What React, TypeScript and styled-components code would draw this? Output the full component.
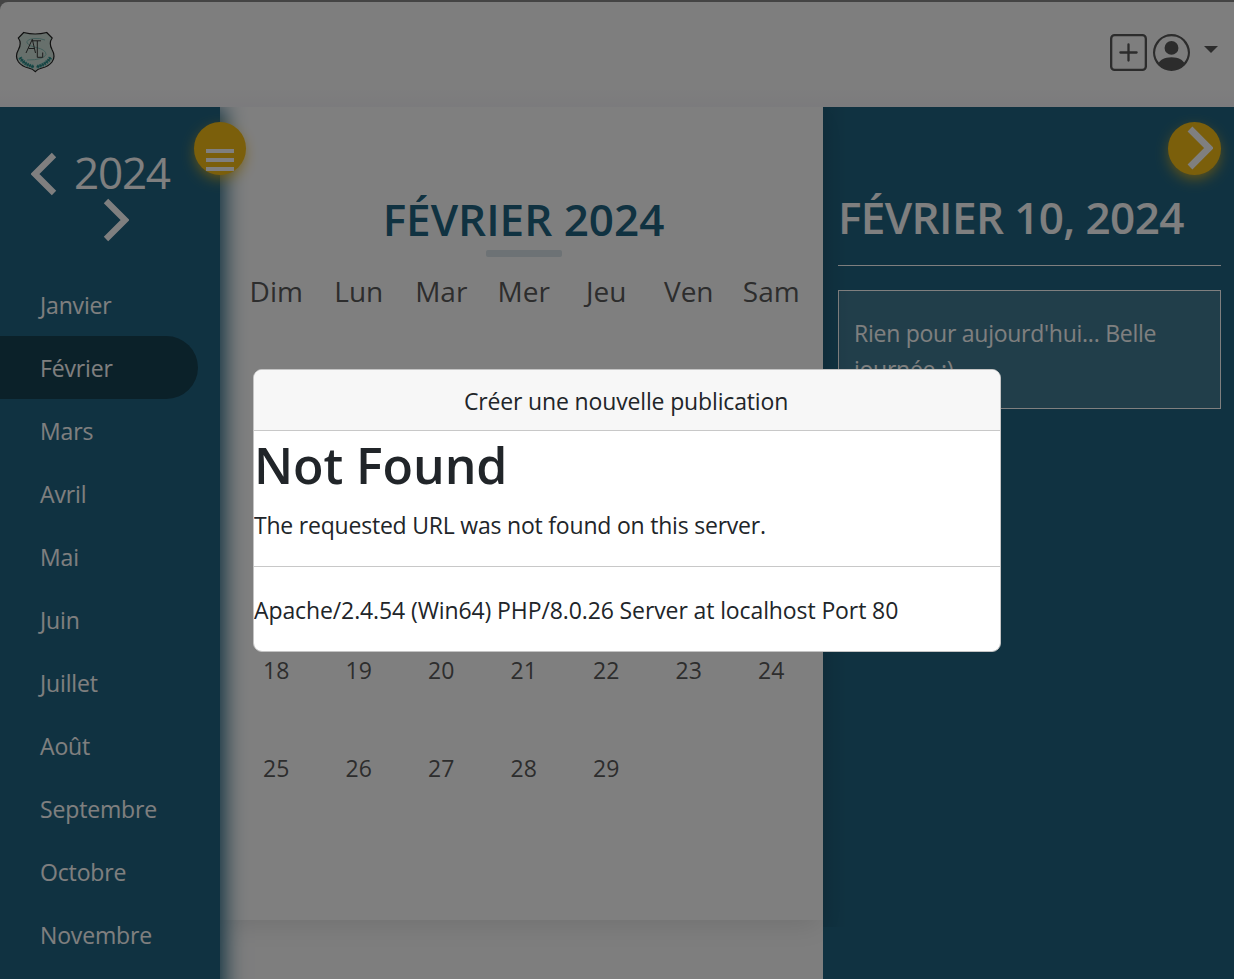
import React from 'react';
import styled, { createGlobalStyle } from 'styled-components';

const GlobalStyle = createGlobalStyle`
  * { box-sizing: border-box; }
  html, body { margin: 0; height: 979px; overflow: hidden; background: #fff; }
  body { font-family: 'Open Sans', 'Noto Sans', sans-serif; font-size: 23px; color: #212529; }
  h1, h2, p, ul { margin: 0; padding: 0; font-weight: inherit; }
`;

const Text = styled.span<{ $ls?: number }>`
  white-space: nowrap;
  letter-spacing: ${(p) => p.$ls ?? 0}px;
`;

const Page = styled.div`
  position: relative;
  display: flex;
  flex-direction: column;
  width: 1234px;
  height: 979px;
  overflow: hidden;
  background: #888;
`;

const Header = styled.header`
  display: flex;
  flex: none;
  justify-content: space-between;
  height: 105px;
  margin-top: 2px;
  padding: 27px 16px 0 14px;
  border-top-left-radius: 8px;
  background: linear-gradient(#fdfdfd 80%, #f7f6fa);
`;

const Actions = styled.div`
  display: flex;
  align-items: flex-start;
  padding-top: 5px;
  gap: 6px;
`;

const Caret = styled.span`
  margin: 12px 0 0 8px;
  border: 7px solid transparent;
  border-top-color: #585858;
  border-bottom: 0;
`;

const Calendar = styled.main`
  display: flex;
  flex: 1;
  min-height: 0;
  overflow: hidden;
  background: #fcfcfc;
`;

const Sidebar = styled.aside`
  position: relative;
  z-index: 2;
  flex: none;
  width: 220px;
  height: 900px;
  background: #216583;
  box-shadow: 5px 0 20px 0 #216583;
  color: #fff;
`;

const YearPicker = styled.div`
  display: flex;
  flex-wrap: wrap;
  align-content: flex-start;
  height: 166px;
  padding: 43px 15px 0 31px;
  font-size: 44px;
  line-height: 45px;
`;

const YearButton = styled.span<{ $next?: boolean }>`
  display: flex;
  height: 46px;
  align-items: center;
  padding-top: 2px;
  margin: ${(p) => (p.$next ? '0 0 0 72px' : '0 17px 0 0')};
`;

const Month = styled.li<{ $active?: boolean }>`
  display: flex;
  align-items: center;
  width: ${(p) => (p.$active ? 198 : 220)}px;
  height: 63px;
  padding-left: 40px;
  border-radius: 0 32px 32px 0;
  background: ${(p) => (p.$active ? '#164253' : 'transparent')};
`;

const RoundButton = styled.button<{ $left: number; $size: number }>`
  position: absolute;
  z-index: 3;
  top: 15px;
  left: ${(p) => p.$left}px;
  display: flex;
  align-items: flex-start;
  width: ${(p) => p.$size}px;
  height: 53px;
  padding: 0;
  border: 0;
  border-radius: 50%;
  background: #f7be16;
  box-shadow: 0 5px 15px -3px #f7be16;
`;

const Bars = styled.span`
  display: flex;
  flex-direction: column;
  justify-content: space-between;
  width: 28px;
  height: 22px;
  margin: 27px 0 0 12px;
  & > i { height: 4px; background: #fff; }
`;

const CloseIcon = styled.span`
  display: flex;
  margin: 4px 0 0 19px;
`;

const MonthView = styled.section`
  z-index: 1;
  flex: none;
  width: 603px;
  height: 813px;
  padding: 85px 6px 0 15px;
  background: #fff;
  box-shadow: 0 10px 24px -5px rgba(0, 0, 0, 0.1);
`;

const MonthTitle = styled.h2`
  display: flex;
  flex-direction: column;
  align-items: center;
  height: 76px;
  margin-left: -5px;
  font-size: 44px;
  line-height: 54px;
  font-weight: 600;
  color: #216583;
  &::after {
    content: '';
    width: 76px;
    height: 7px;
    margin-top: 4px;
    border-radius: 2px;
    background: #dae4ea;
  }
`;

const Grid = styled.div`
  display: grid;
  grid-template-columns: repeat(7, 82.5px);
  grid-template-rows: 46px;
  grid-auto-rows: 98px;
  justify-items: center;
  color: #5b5b5b;
`;

const WeekDay = styled.div`
  font-size: 28px;
  line-height: 46px;
`;

const PastWeeks = styled.div`
  grid-column: 1 / -1;
  grid-row: span 3;
`;

const Day = styled.div`
  padding-top: 46px;
  line-height: 32px;
`;

const Events = styled.section`
  position: relative;
  flex: 1;
  padding: 85px 13px 0 15px;
  background: #216583;
  color: #fff;
  &::before {
    content: '';
    position: absolute;
    inset: 0 auto auto 0;
    width: 26px;
    height: 820px;
    background: linear-gradient(90deg, rgba(0, 0, 0, 0.08), transparent);
  }
`;

const EventsTitle = styled.h2`
  height: 74px;
  border-bottom: 1px solid #fff;
  font-size: 44px;
  line-height: 50px;
  font-weight: 600;
`;

const EventCard = styled.div`
  height: 119px;
  margin-top: 24px;
  padding: 24px 15px;
  border: 1px solid #fff;
  background: rgba(255, 255, 255, 0.15);
  line-height: 36px;
`;

const Backdrop = styled.div`
  position: absolute;
  z-index: 10;
  inset: 0;
  background: rgba(0, 0, 0, 0.5);
`;

const Modal = styled.div`
  position: absolute;
  top: 369px;
  left: 253px;
  width: 748px;
  height: 283px;
  border: 1px solid #c4c4c4;
  border-radius: 9px;
  background: #fff;
  overflow: hidden;
`;

const ModalHeader = styled.div`
  height: 61px;
  padding-right: 2px;
  border-bottom: 1px solid #c8c8c8;
  background: #f7f7f7;
  line-height: 63px;
  text-align: center;
`;

const NotFound = styled.h1`
  padding-top: 4px;
  font-size: 50px;
  line-height: 60px;
  font-weight: 600;
`;

const Message = styled.p`
  height: 72px;
  padding-top: 12px;
  border-bottom: 1px solid #c8c8c8;
  line-height: 36px;
`;

const Signature = styled.p`
  padding-top: 25px;
  line-height: 36px;
`;

function Chevron({ right, bold }: { right?: boolean; bold?: boolean }) {
  return (
    <svg width="26" height="44" viewBox="0 0 26 44">
      <path d={right ? 'M3 3 22 22 3 41' : 'M23 3 4 22 23 41'} fill="none" stroke="#fff" strokeWidth={bold ? 6.8 : 6.2} />
    </svg>
  );
}

function Crest() {
  return (
    <svg width="42" height="46" viewBox="0 0 42 46" fill="none">
      <path
        d="M9.700 3.500Q21 6.500 32.700 3.500L38.200 9Q34.500 14 38 20.500Q42 27.500 38 33Q34.500 37.500 28 39Q23.500 40 21.300 42.600Q19 40 14.500 39Q8 37.500 4.500 33Q0.500 27.500 4.500 20.500Q8 14 4.300 9Z"
        fill="#cfe0d8"
        stroke="#222"
        strokeWidth="1.200"
      />
      <path d="M31 11Q26 9 20 9.500Q12 10.500 13 14Q15 17 22 18.500Q32 20.500 32 25.500Q30 31 13 31" stroke="#7dbab3" strokeWidth=".9" />
      <path d="M12 24 18.300 10.300 21.500 24M14.500 19.500H20.500M18 11.800H27M23.300 11.800V28.300H28.700V23.500" stroke="#3a3a3a" strokeWidth="1" />
      <path d="M6 28.500Q10 35.500 20 38M36.500 28.500Q32.500 35.500 22.500 38" stroke="#37a09d" strokeWidth="3.600" strokeDasharray="1.600 .9" />
      <path d="M6 28.500Q10 35.500 20 38M36.500 28.500Q32.500 35.500 22.500 38" stroke="#2f8482" strokeWidth="1.400" />
    </svg>
  );
}

const months = ['Janvier', 'Février', 'Mars', 'Avril', 'Mai', 'Juin', 'Juillet', 'Août', 'Septembre', 'Octobre', 'Novembre'];
const weekDays = ['Dim', 'Lun', 'Mar', 'Mer', 'Jeu', 'Ven', 'Sam'];
const days = Array.from({ length: 12 }, (_, i) => 18 + i);

export default function App() {
  return (
    <Page>
      <GlobalStyle />
      <Header>
        <Crest />
        <Actions>
          <svg width="37" height="37" viewBox="0 0 16 16" fill="#585858">
            <path d="M14 1a1 1 0 0 1 1 1v12a1 1 0 0 1-1 1H2a1 1 0 0 1-1-1V2a1 1 0 0 1 1-1zM2 0a2 2 0 0 0-2 2v12a2 2 0 0 0 2 2h12a2 2 0 0 0 2-2V2a2 2 0 0 0-2-2z" />
            <path d="M8 4a.5.5 0 0 1 .5.5v3h3a.5.5 0 0 1 0 1h-3v3a.5.5 0 0 1-1 0v-3h-3a.5.5 0 0 1 0-1h3v-3A.5.5 0 0 1 8 4" />
          </svg>
          <svg width="37" height="37" viewBox="0 0 16 16" fill="#585858">
            <path d="M11 6a3 3 0 1 1-6 0 3 3 0 0 1 6 0" />
            <path fillRule="evenodd" d="M0 8a8 8 0 1 1 16 0A8 8 0 0 1 0 8m8-7a7 7 0 0 0-5.468 11.370C3.242 11.226 4.805 10 8 10s4.757 1.225 5.468 2.370A7 7 0 0 0 8 1" />
          </svg>
          <Caret />
        </Actions>
      </Header>
      <Calendar>
        <Sidebar>
          <YearPicker>
            <YearButton><Chevron /></YearButton>
            <Text $ls={-1.2}>2024</Text>
            <YearButton $next><Chevron right /></YearButton>
          </YearPicker>
          <ul>
            {months.map((m) => (
              <Month key={m} $active={m === 'Février'}><Text $ls={-0.15}>{m}</Text></Month>
            ))}
          </ul>
          <RoundButton $left={194} $size={52}>
            <Bars><i /><i /><i /></Bars>
          </RoundButton>
        </Sidebar>
        <MonthView>
          <MonthTitle><Text>FÉVRIER 2024</Text></MonthTitle>
          <Grid>
            {weekDays.map((d) => <WeekDay key={d}>{d}</WeekDay>)}
            <PastWeeks />
            {days.map((d) => <Day key={d}>{d}</Day>)}
          </Grid>
        </MonthView>
        <Events>
          <EventsTitle><Text $ls={-0.6}>FÉVRIER 10, 2024</Text></EventsTitle>
          <EventCard>
            <Text $ls={-0.26}>Rien pour aujourd'hui... Belle</Text><br />
            <Text $ls={-0.26}>journée :)</Text>
          </EventCard>
          <RoundButton $left={345} $size={53}>
            <CloseIcon><Chevron right bold /></CloseIcon>
          </RoundButton>
        </Events>
      </Calendar>
      <Backdrop>
        <Modal role="dialog">
          <ModalHeader><Text $ls={-0.15}>Créer une nouvelle publication</Text></ModalHeader>
          <NotFound><Text $ls={-0.1}>Not Found</Text></NotFound>
          <Message><Text $ls={-0.21}>The requested URL was not found on this server.</Text></Message>
          <Signature><Text $ls={-0.11}>Apache/2.4.54 (Win64) PHP/8.0.26 Server at localhost Port 80</Text></Signature>
        </Modal>
      </Backdrop>
    </Page>
  );
}
